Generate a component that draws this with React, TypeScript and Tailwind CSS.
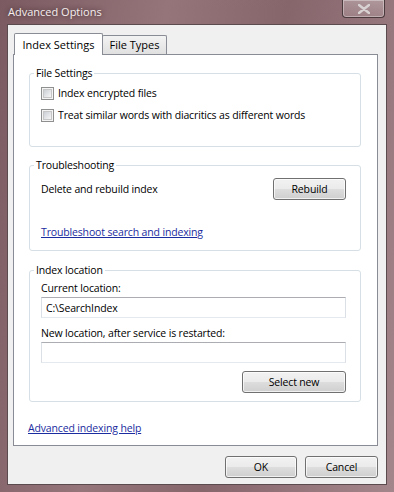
import React from 'react';

const font = { fontFamily: '"Open Sans", "Noto Sans", sans-serif' };

function Button({ label, className = '' }: { label: string; className?: string }) {
    return (
        <button
            type="button"
            className={`flex items-center justify-center rounded-[3px] border border-[#707070] bg-[linear-gradient(to_bottom,#f2f2f2_0%,#ebebeb_48%,#dddddd_52%,#cfcfcf_100%)] text-black shadow-[inset_0_0_0_1px_rgba(255,255,255,0.7)] ${className}`}
        >
            {label}
        </button>
    );
}

function Checkbox({ label }: { label: string }) {
    return (
        <label className="flex h-[16px] items-center">
            <span className="flex h-[13px] w-[13px] items-center justify-center border border-[#8e8f8f] bg-[#f4f4f4]">
                <span className="h-[9px] w-[9px] border border-[#c6c6c6] bg-[linear-gradient(135deg,#cbcfd5,#f6f6f6)]" />
            </span>
            <span className="ml-[4px]">{label}</span>
        </label>
    );
}

function Group({ title, children, className = '' }: { title: string; children: React.ReactNode; className?: string }) {
    return (
        <fieldset className={`rounded-[3px] border border-[#d5dfe5] pl-[11px] pr-[14px] ${className}`}>
            <legend className="ml-[-7px] px-[2px] leading-[16px]">{title}</legend>
            {children}
        </fieldset>
    );
}

function TextBox({ value }: { value?: string }) {
    return (
        <div className="flex h-[21px] items-center border border-[#abadb3] border-x-[#dbdfe6] border-b-[#e3e9ef] bg-white px-[4px]">
            {value}
        </div>
    );
}

export default function App() {
    return (
        <div
            style={font}
            className="flex h-[492px] w-[394px] flex-col bg-[linear-gradient(100deg,#7b5b61_0%,#95747a_35%,#86656b_60%,#a3868b_100%)] px-[7px] text-[10.5px] leading-[16px] tracking-[-0.15px] text-black"
        >
            {/* title bar */}
            <div className="relative flex h-[24px] shrink-0 items-center">
                <span className="ml-[1px] text-[11px] tracking-normal text-[#f4eeee] [text-shadow:0_0_5px_rgba(40,20,25,0.8)]">
                    Advanced Options
                </span>
                <div className="absolute right-[2px] top-0 flex h-[18px] w-[43px] items-center justify-center rounded-b-[4px] border border-t-0 border-[#4a3a3e] bg-[linear-gradient(to_bottom,rgba(255,255,255,0.25),rgba(255,255,255,0.1))] shadow-[inset_0_0_0_1px_rgba(255,255,255,0.35)]">
                    <svg width="12" height="10" viewBox="0 0 12 10">
                        <path d="M1 1 L11 9 M11 1 L1 9" stroke="#d8d2d3" strokeWidth="2.4" strokeLinecap="round" />
                    </svg>
                </div>
            </div>

            {/* client area */}
            <div className="flex h-[461px] shrink-0 flex-col border border-[#5b4a4e] bg-[#f0f0f0] pl-[5px] pr-[8px] pt-[8px]">
                <div className="relative z-10 -mb-px flex items-end pl-[1px] text-[11px] tracking-normal">
                    <div className="flex h-[22px] w-[89px] items-start justify-center rounded-t-[2px] border border-b-0 border-[#898c95] bg-white pt-[3px]">
                        Index Settings
                    </div>
                    <div className="-ml-px mb-px flex h-[19px] w-[65px] items-start justify-center rounded-t-[2px] border border-b-0 border-[#898c95] bg-[linear-gradient(to_bottom,#f3f3f3,#e0e0e0)] pt-[1px]">
                        File Types
                    </div>
                </div>

                <div className="flex h-[392px] flex-col border border-[#898c95] bg-white pl-[15px] pr-[16px] pt-[10px]">
                    <Group title="File Settings" className="pb-[23px]">
                        <div className="mt-[4px] flex flex-col gap-[6px]">
                            <Checkbox label="Index encrypted files" />
                            <Checkbox label="Treat similar words with diacritics as different words" />
                        </div>
                    </Group>

                    <Group title="Troubleshooting" className="mt-[10px] pb-[10px]">
                        <div className="mt-[4px] flex h-[23px] items-center justify-between">
                            <span>Delete and rebuild index</span>
                            <Button label="Rebuild" className="h-[22px] w-[73px]" />
                        </div>
                        <a href="#" className="mt-[24px] block text-[#1a2ca0] underline">
                            Troubleshoot search and indexing
                        </a>
                    </Group>

                    <Group title="Index location" className="mt-[11px] pb-[8px]">
                        <div className="mt-[2px]">Current location:</div>
                        <div className="mt-[1px]">
                            <TextBox value="C:\SearchIndex" />
                        </div>
                        <div className="mt-[7px]">New location, after service is restarted:</div>
                        <div className="mt-[1px]">
                            <TextBox />
                        </div>
                        <div className="mt-[8px] flex justify-end">
                            <Button label="Select new" className="h-[22px] w-[104px]" />
                        </div>
                    </Group>

                    <a href="#" className="-ml-px mt-[18px] block self-start text-[#1a2ca0] underline">
                        Advanced indexing help
                    </a>
                </div>

                <div className="mt-[10px] flex justify-end gap-[8px]">
                    <Button label="OK" className="h-[22px] w-[72px]" />
                    <Button label="Cancel" className="h-[22px] w-[73px]" />
                </div>
            </div>
        </div>
    );
}
